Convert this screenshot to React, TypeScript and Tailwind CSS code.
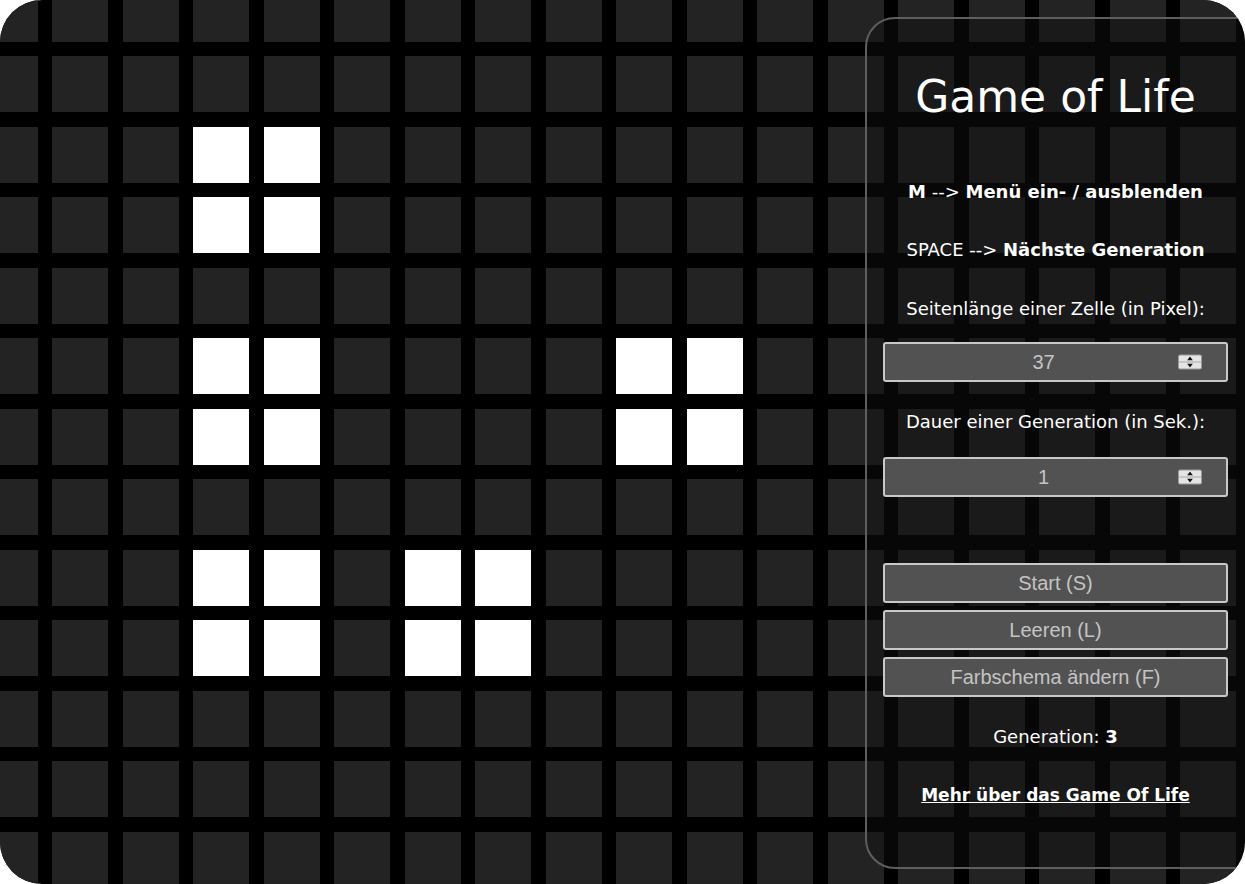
import { Fragment } from 'react';

const COLS = 18;
const ROWS = 13;

// live cells as "col,row"
const alive = new Set([
  '3,2', '4,2', '3,3', '4,3',
  '3,5', '4,5', '3,6', '4,6',
  '9,5', '10,5', '9,6', '10,6',
  '3,8', '4,8', '3,9', '4,9',
  '6,8', '7,8', '6,9', '7,9',
]);

function Spinner() {
  return (
    <div className="absolute right-[24px] top-1/2 -translate-y-1/2 w-[24px] h-[15px] flex flex-col rounded-[2px] border border-[#9a9a9a] bg-[#e4e4e4] overflow-hidden">
      <div className="flex-1 flex items-center justify-center border-b border-[#a8a8a8]">
        <svg width="6" height="4" viewBox="0 0 6 4"><path d="M3 0L6 4H0Z" fill="#111" /></svg>
      </div>
      <div className="flex-1 flex items-center justify-center">
        <svg width="6" height="4" viewBox="0 0 6 4"><path d="M0 0H6L3 4Z" fill="#111" /></svg>
      </div>
    </div>
  );
}

function NumberField({ value }: { value: string }) {
  return (
    <div className="relative h-[40px] w-full rounded-[3px] border-2 border-[#c8c8c8] bg-[#525252] flex items-center justify-center pr-[24px]">
      <span className="font-['Liberation_Sans',Arial,sans-serif] text-[20px] text-[#c4c4c4]">{value}</span>
      <Spinner />
    </div>
  );
}

function PanelButton({ label }: { label: string }) {
  return (
    <button className="h-[40px] w-full rounded-[3px] border-2 border-[#c8c8c8] bg-[#525252] font-['Liberation_Sans',Arial,sans-serif] text-[20px] text-[#c4c4c4]">
      {label}
    </button>
  );
}

export default function App() {
  return (
    <div className="w-full h-[884px] bg-white">
      <div className="relative w-full h-[884px] rounded-[42px] overflow-hidden bg-black">
        {/* board */}
        <div className="grid grid-cols-[repeat(18,56px)] auto-rows-[56px] gap-[14.5px] ml-[-18.5px] mt-[-14.5px]">
          {Array.from({ length: ROWS }).map((_, r) => (
            <Fragment key={r}>
              {Array.from({ length: COLS }).map((_, c) => (
                <div
                  key={c}
                  className={alive.has(`${c},${r}`) ? 'bg-white' : 'bg-[#232323]'}
                />
              ))}
            </Fragment>
          ))}
        </div>

        {/* menu, its right edge runs past the window */}
        <div className="absolute left-[865px] top-[17px] w-[420px] h-[852px] rounded-[30px] border-2 border-[#5e5e5e] bg-[rgba(15,15,15,0.45)] pl-4 pr-[55px] flex flex-col items-center text-white font-['DejaVu_Sans',Verdana,sans-serif]">
          <h1 className="mt-[52px] h-[52px] leading-[52px] text-[44px] font-normal whitespace-nowrap">Game of Life</h1>

          <p className="mt-[57px] h-[24px] leading-[24px] text-[18px] whitespace-nowrap">
            <b>M</b> --&gt; <b>Menü ein- / ausblenden</b>
          </p>
          <p className="mt-[34px] h-[24px] leading-[24px] text-[18px] whitespace-nowrap">
            SPACE --&gt; <b>Nächste Generation</b>
          </p>

          <p className="mt-[35px] h-[24px] leading-[24px] text-[18px] whitespace-nowrap">Seitenlänge einer Zelle (in Pixel):</p>
          <div className="mt-[21px] w-full">
            <NumberField value="37" />
          </div>

          <p className="mt-[28px] h-[24px] leading-[24px] text-[18px] whitespace-nowrap">Dauer einer Generation (in Sek.):</p>
          <div className="mt-[23px] w-full">
            <NumberField value="1" />
          </div>

          <div className="mt-[66px] w-full flex flex-col gap-[7px]">
            <PanelButton label="Start (S)" />
            <PanelButton label="Leeren (L)" />
            <PanelButton label="Farbschema ändern (F)" />
          </div>

          <p className="mt-[28px] h-[24px] leading-[24px] text-[18px] whitespace-nowrap">
            Generation: <b>3</b>
          </p>
          <a href="#" className="mt-[34px] h-[24px] leading-[24px] text-[17px] font-bold underline whitespace-nowrap text-white">
            Mehr über das Game Of Life
          </a>
        </div>
      </div>
    </div>
  );
}
